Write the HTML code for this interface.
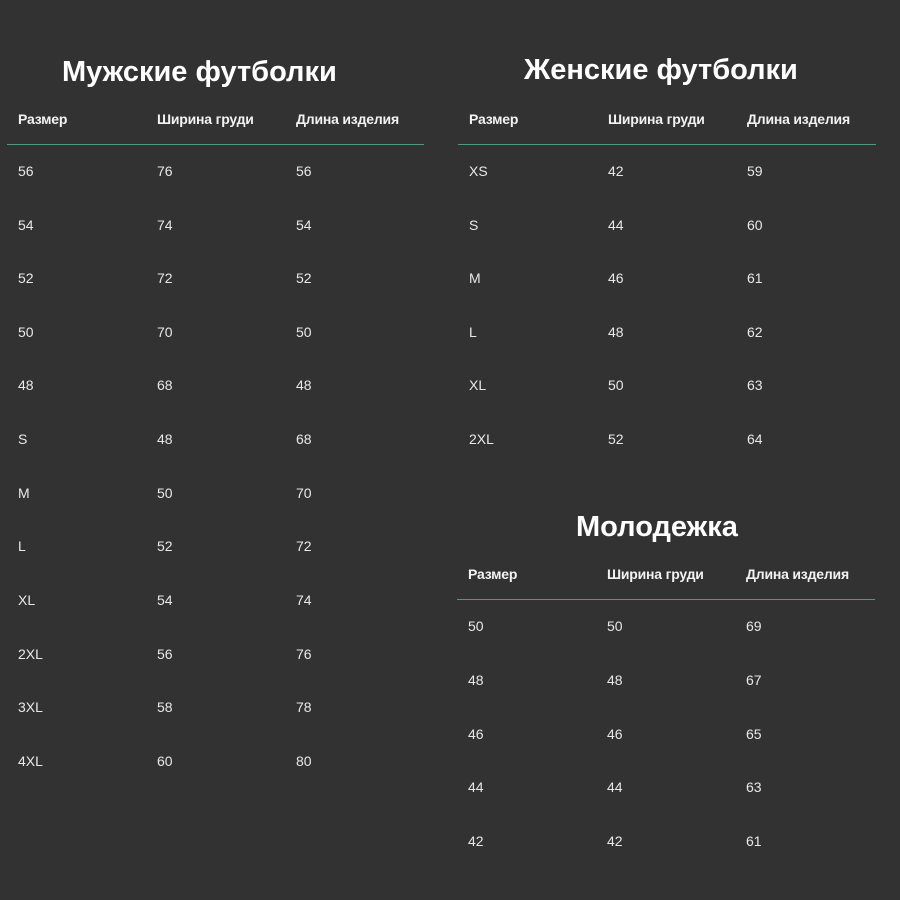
<!DOCTYPE html>
<html><head><meta charset="utf-8"><style>
body{margin:0;width:900px;height:900px;background:#323232;position:relative;overflow:hidden;font-family:"Liberation Sans",sans-serif;color:#f2f2f2}
div{position:absolute;white-space:nowrap;line-height:20px}
.h{font-size:29px;font-weight:bold;color:#fff;line-height:32px}
.th{font-size:14px;font-weight:bold;letter-spacing:-0.2px}
.n{font-size:14px;color:#e8e8e8}
.l{height:1px;background:#4f9a7e}
</style></head><body>
<div class="h" style="left:62px;top:56px">Мужские футболки</div>
<div class="h" style="left:524px;top:54px">Женские футболки</div>
<div class="h" style="left:576px;top:511px">Молодежка</div>

<div class="th" style="left:18px;top:109px">Размер</div>
<div class="th" style="left:157px;top:109px">Ширина груди</div>
<div class="th" style="left:296px;top:109px">Длина изделия</div>
<div class="l" style="left:7px;top:144px;width:417px"></div>

<div class="th" style="left:469px;top:109px">Размер</div>
<div class="th" style="left:608px;top:109px">Ширина груди</div>
<div class="th" style="left:747px;top:109px">Длина изделия</div>
<div class="l" style="left:458px;top:144px;width:418px"></div>

<div class="th" style="left:468px;top:564px">Размер</div>
<div class="th" style="left:607px;top:564px">Ширина груди</div>
<div class="th" style="left:746px;top:564px">Длина изделия</div>
<div class="l" style="left:457px;top:599px;width:418px"></div>

<div class="n" style="left:18px;top:161px">56</div><div class="n" style="left:157px;top:161px">76</div><div class="n" style="left:296px;top:161px">56</div>
<div class="n" style="left:18px;top:215px">54</div><div class="n" style="left:157px;top:215px">74</div><div class="n" style="left:296px;top:215px">54</div>
<div class="n" style="left:18px;top:268px">52</div><div class="n" style="left:157px;top:268px">72</div><div class="n" style="left:296px;top:268px">52</div>
<div class="n" style="left:18px;top:322px">50</div><div class="n" style="left:157px;top:322px">70</div><div class="n" style="left:296px;top:322px">50</div>
<div class="n" style="left:18px;top:375px">48</div><div class="n" style="left:157px;top:375px">68</div><div class="n" style="left:296px;top:375px">48</div>
<div class="n" style="left:18px;top:429px">S</div><div class="n" style="left:157px;top:429px">48</div><div class="n" style="left:296px;top:429px">68</div>
<div class="n" style="left:18px;top:483px">M</div><div class="n" style="left:157px;top:483px">50</div><div class="n" style="left:296px;top:483px">70</div>
<div class="n" style="left:18px;top:536px">L</div><div class="n" style="left:157px;top:536px">52</div><div class="n" style="left:296px;top:536px">72</div>
<div class="n" style="left:18px;top:590px">XL</div><div class="n" style="left:157px;top:590px">54</div><div class="n" style="left:296px;top:590px">74</div>
<div class="n" style="left:18px;top:644px">2XL</div><div class="n" style="left:157px;top:644px">56</div><div class="n" style="left:296px;top:644px">76</div>
<div class="n" style="left:18px;top:697px">3XL</div><div class="n" style="left:157px;top:697px">58</div><div class="n" style="left:296px;top:697px">78</div>
<div class="n" style="left:18px;top:751px">4XL</div><div class="n" style="left:157px;top:751px">60</div><div class="n" style="left:296px;top:751px">80</div>

<div class="n" style="left:469px;top:161px">XS</div><div class="n" style="left:608px;top:161px">42</div><div class="n" style="left:747px;top:161px">59</div>
<div class="n" style="left:469px;top:215px">S</div><div class="n" style="left:608px;top:215px">44</div><div class="n" style="left:747px;top:215px">60</div>
<div class="n" style="left:469px;top:268px">M</div><div class="n" style="left:608px;top:268px">46</div><div class="n" style="left:747px;top:268px">61</div>
<div class="n" style="left:469px;top:322px">L</div><div class="n" style="left:608px;top:322px">48</div><div class="n" style="left:747px;top:322px">62</div>
<div class="n" style="left:469px;top:375px">XL</div><div class="n" style="left:608px;top:375px">50</div><div class="n" style="left:747px;top:375px">63</div>
<div class="n" style="left:469px;top:429px">2XL</div><div class="n" style="left:608px;top:429px">52</div><div class="n" style="left:747px;top:429px">64</div>

<div class="n" style="left:468px;top:616px">50</div><div class="n" style="left:607px;top:616px">50</div><div class="n" style="left:746px;top:616px">69</div>
<div class="n" style="left:468px;top:670px">48</div><div class="n" style="left:607px;top:670px">48</div><div class="n" style="left:746px;top:670px">67</div>
<div class="n" style="left:468px;top:724px">46</div><div class="n" style="left:607px;top:724px">46</div><div class="n" style="left:746px;top:724px">65</div>
<div class="n" style="left:468px;top:777px">44</div><div class="n" style="left:607px;top:777px">44</div><div class="n" style="left:746px;top:777px">63</div>
<div class="n" style="left:468px;top:831px">42</div><div class="n" style="left:607px;top:831px">42</div><div class="n" style="left:746px;top:831px">61</div>
</body></html>
